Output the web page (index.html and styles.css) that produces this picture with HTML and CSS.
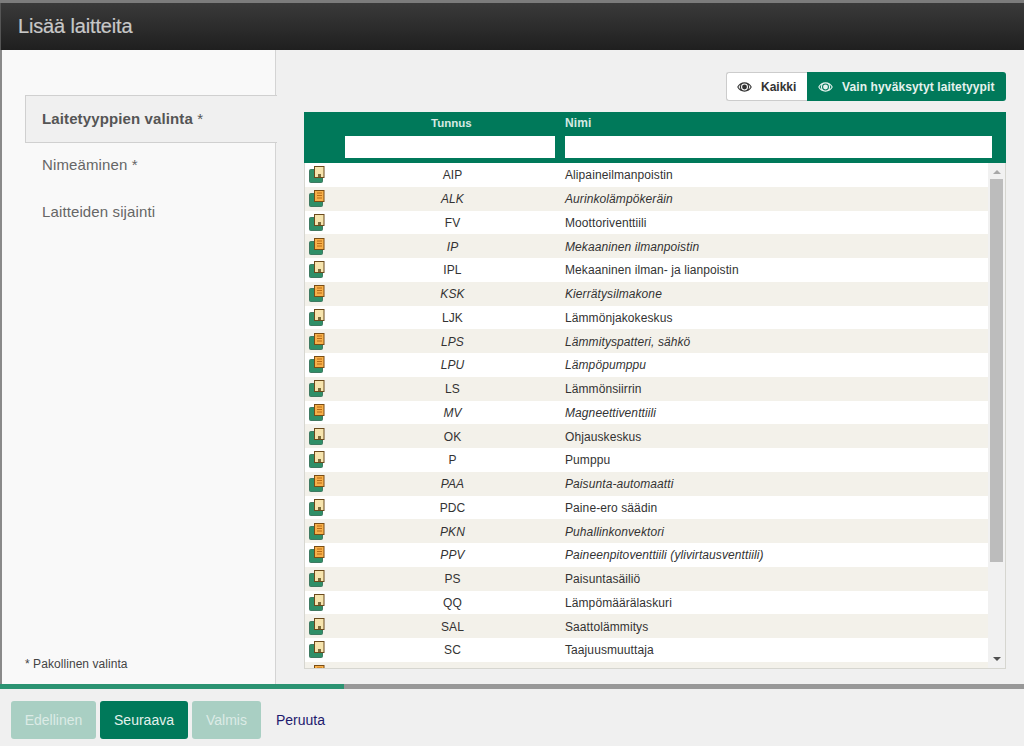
FILE: index.html
```html
<!DOCTYPE html>
<html lang="fi">
<head>
<meta charset="utf-8">
<title>Lisää laitteita</title>
<link rel="stylesheet" href="styles.css">
</head>
<body>
<svg class="defs" width="0" height="0" aria-hidden="true">
  <symbol id="icon-a" viewBox="0 0 16 17">
    <rect x="0.5" y="3.500" width="13" height="13" rx="1" fill="#2f8f68" stroke="#3f7a62"/>
    <rect x="5.500" y="0.500" width="9.500" height="11" fill="#f6e4ae" stroke="#6b4a1c"/>
    <rect x="9" y="8" width="3" height="3" fill="#7a6a3a"/>
  </symbol>
  <symbol id="icon-b" viewBox="0 0 16 17">
    <rect x="0.5" y="3.500" width="13" height="13" rx="1" fill="#2f8f68" stroke="#3f7a62"/>
    <rect x="5.500" y="0.500" width="9.500" height="11" fill="#f7b04a" stroke="#7a4d14"/>
    <path d="M8 3h5M8 5.500h5M8 8h5" stroke="#b86a14" stroke-width="1"/>
  </symbol>
  <symbol id="eye" viewBox="0 0 16 12">
    <path fill="currentColor" fill-rule="evenodd" d="M8 1C4.600 1 1.800 3 .2 6c1.600 3 4.400 5 7.800 5s6.200-2 7.800-5C14.200 3 11.400 1 8 1zm0 1.300a3.700 3.700 0 1 1 0 7.400 3.700 3.700 0 0 1 0-7.400zM3.600 3.600A8 8 0 0 0 1.500 6a8 8 0 0 0 2.100 2.400 5 5 0 0 1 0-4.800zm8.800 0a5 5 0 0 1 0 4.800A8 8 0 0 0 14.500 6a8 8 0 0 0-2.100-2.400z"/>
    <circle cx="8" cy="6" r="2.600" fill="currentColor"/>
  </symbol>
</svg>
<div class="app">
  <header class="title-bar"><h1>Lisää laitteita</h1></header>
  <div class="main">
    <aside class="side">
      <div class="side-top"></div>
      <nav class="steps">
        <div class="step active">Laitetyyppien valinta <span class="star">*</span></div>
        <div class="step">Nimeäminen *</div>
        <div class="step">Laitteiden sijainti</div>
      </nav>
      <p class="req">* Pakollinen valinta</p>
    </aside>
    <section class="content">
      <div class="toggle">
        <button class="tg tg-off"><svg class="eye"><use href="#eye"/></svg>Kaikki</button>
        <button class="tg tg-on"><svg class="eye"><use href="#eye"/></svg>Vain hyväksytyt laitetyypit</button>
      </div>
      <div class="grid">
        <div class="grid-head">
          <div class="gh-labels"><span class="gh-code">Tunnus</span><span class="gh-name">Nimi</span></div>
          <div class="gh-filters"><input class="f-code" type="text" aria-label="Tunnus"><input class="f-name" type="text" aria-label="Nimi"></div>
        </div>
        <div class="grid-body">
          <div class="rows">
            <div class="row"><svg class="ic"><use href="#icon-a"/></svg><span class="code">AIP</span><span class="name">Alipaineilmanpoistin</span></div>
            <div class="row alt it"><svg class="ic"><use href="#icon-b"/></svg><span class="code">ALK</span><span class="name">Aurinkolämpökeräin</span></div>
            <div class="row"><svg class="ic"><use href="#icon-a"/></svg><span class="code">FV</span><span class="name">Moottoriventtiili</span></div>
            <div class="row alt it"><svg class="ic"><use href="#icon-b"/></svg><span class="code">IP</span><span class="name">Mekaaninen ilmanpoistin</span></div>
            <div class="row"><svg class="ic"><use href="#icon-a"/></svg><span class="code">IPL</span><span class="name">Mekaaninen ilman- ja lianpoistin</span></div>
            <div class="row alt it"><svg class="ic"><use href="#icon-b"/></svg><span class="code">KSK</span><span class="name">Kierrätysilmakone</span></div>
            <div class="row"><svg class="ic"><use href="#icon-a"/></svg><span class="code">LJK</span><span class="name">Lämmönjakokeskus</span></div>
            <div class="row alt it"><svg class="ic"><use href="#icon-b"/></svg><span class="code">LPS</span><span class="name">Lämmityspatteri, sähkö</span></div>
            <div class="row it"><svg class="ic"><use href="#icon-b"/></svg><span class="code">LPU</span><span class="name">Lämpöpumppu</span></div>
            <div class="row alt"><svg class="ic"><use href="#icon-a"/></svg><span class="code">LS</span><span class="name">Lämmönsiirrin</span></div>
            <div class="row it"><svg class="ic"><use href="#icon-b"/></svg><span class="code">MV</span><span class="name">Magneettiventtiili</span></div>
            <div class="row alt"><svg class="ic"><use href="#icon-a"/></svg><span class="code">OK</span><span class="name">Ohjauskeskus</span></div>
            <div class="row"><svg class="ic"><use href="#icon-a"/></svg><span class="code">P</span><span class="name">Pumppu</span></div>
            <div class="row alt it"><svg class="ic"><use href="#icon-b"/></svg><span class="code">PAA</span><span class="name">Paisunta-automaatti</span></div>
            <div class="row"><svg class="ic"><use href="#icon-a"/></svg><span class="code">PDC</span><span class="name">Paine-ero säädin</span></div>
            <div class="row alt it"><svg class="ic"><use href="#icon-b"/></svg><span class="code">PKN</span><span class="name">Puhallinkonvektori</span></div>
            <div class="row it"><svg class="ic"><use href="#icon-b"/></svg><span class="code">PPV</span><span class="name">Paineenpitoventtiili (ylivirtausventtiili)</span></div>
            <div class="row alt"><svg class="ic"><use href="#icon-a"/></svg><span class="code">PS</span><span class="name">Paisuntasäiliö</span></div>
            <div class="row"><svg class="ic"><use href="#icon-a"/></svg><span class="code">QQ</span><span class="name">Lämpömäärälaskuri</span></div>
            <div class="row alt"><svg class="ic"><use href="#icon-a"/></svg><span class="code">SAL</span><span class="name">Saattolämmitys</span></div>
            <div class="row"><svg class="ic"><use href="#icon-a"/></svg><span class="code">SC</span><span class="name">Taajuusmuuttaja</span></div>
            <div class="row alt"><svg class="ic"><use href="#icon-b"/></svg></div>
          </div>
          <div class="scroll">
            <span class="arr arr-up"></span>
            <div class="track"><div class="thumb"></div></div>
            <span class="arr arr-down"></span>
          </div>
        </div>
      </div>
    </section>
  </div>
  <div class="progress"><div class="progress-fill"></div></div>
  <footer class="foot">
    <button class="btn dim b-prev">Edellinen</button>
    <button class="btn b-next">Seuraava</button>
    <button class="btn dim b-done">Valmis</button>
    <a class="cancel" href="#">Peruuta</a>
  </footer>
</div>
</body>
</html>
```

FILE: styles.css
```css
* { box-sizing: border-box; }
html, body { margin: 0; height: 100%; }
body { width: 1024px; height: 746px; overflow: hidden; background: #f0f0f0; font-family: "Liberation Sans", Arial, sans-serif; font-size: 12px; color: #333; }
.defs { position: absolute; }
.app { height: 746px; display: flex; flex-direction: column; border-top: 3px solid #7c7c7c; }
.title-bar { height: 47px; flex: none; background: linear-gradient(#3a3a3a, #1f1f1f); display: flex; align-items: center; padding: 0 0 0 17px; border-left: 1px solid #555; }
.title-bar h1 { margin: 0; font-size: 20px; font-weight: 400; color: #c8c8c8; letter-spacing: -0.15px; -webkit-text-stroke: 0.2px #c8c8c8; }
.main { flex: 1; min-height: 0; display: flex; border-left: 2px solid #8a8a8a; }
.side { width: 274px; flex: none; background: #f9f9f9; border-right: 1px solid #d4d4d4; display: flex; flex-direction: column; padding-bottom: 12px; }
.side-top { height: 45px; flex: none; }
.steps { flex: 1; display: flex; flex-direction: column; margin-left: 23px; }
.step { height: 47px; flex: none; display: flex; align-items: center; padding: 0 0 5px 17px; font-size: 15px; letter-spacing: 0.12px; color: #666; white-space: pre; }
.step.active { width: 252px; margin-right: -1px; background: #f0f0f0; border: 1px solid #d0d0d0; border-right: 0; font-weight: 700; color: #555; padding: 0 0 2px 16px; height: 48px; }
.star { font-weight: 400; }
.req { margin: 0 0 0 23px; font-size: 12px; color: #444; line-height: 16px; letter-spacing: 0.06px; }
.content { flex: 1; min-width: 0; display: flex; flex-direction: column; padding: 22px 18px 15px 28px; }
.toggle { display: flex; justify-content: flex-end; height: 29px; flex: none; margin-bottom: 11px; }
.tg { height: 29px; display: flex; align-items: center; font-family: inherit; font-size: 12px; font-weight: 700; padding: 0; margin: 0; border-radius: 0; }
.eye { width: 15px; height: 12px; margin-right: 9px; }
.tg-off { width: 81px; background: #fff; color: #333; border: 1px solid #ccc; border-right: 0; border-radius: 3px 0 0 3px; padding-left: 10px; }
.tg-on { width: 199px; background: #00795a; color: #e6f2ee; border: 0; border-radius: 0 3px 3px 0; padding-left: 11px; letter-spacing: 0.12px; }
.grid { flex: 1; min-height: 0; display: flex; flex-direction: column; border: 1px solid #d6d6d0; border-top: 0; background: #f4f4f4; }
.grid-head { height: 51px; flex: none; background: #00795a; margin: 0 -1px; display: flex; flex-direction: column; }
.gh-labels { height: 22px; margin-bottom: 2px; display: flex; align-items: center; font-weight: 700; color: #d5e9e2; font-size: 11.5px; }
.gh-code { width: 261px; padding-left: 127px; }
.gh-name { font-size: 12px; letter-spacing: 0.1px; }
.gh-filters { display: flex; padding-left: 41px; }
.gh-filters input { height: 22px; border: 0; background: #fff; padding: 0; margin: 0; }
.f-code { width: 210px; margin-right: 10px !important; }
.f-name { width: 427px; }
.grid-body { flex: 1; min-height: 0; display: flex; overflow: hidden; }
.rows { flex: 1; min-width: 0; overflow: hidden; }
.row { height: 23.75px; display: flex; align-items: center; padding-top: 1px; background: #fff; color: #333; letter-spacing: 0.09px; }
.row.alt { background: #f3f1ea; }
.row.it .code, .row.it .name { font-style: italic; }
.ic { width: 16px; height: 17px; flex: none; margin: -1px 0 0 4px; }
.code { width: 240px; flex: none; text-align: center; padding-left: 15px; }
.name { margin-left: 0; white-space: nowrap; }
.scroll { width: 17px; flex: none; background: #f1f1f1; display: flex; flex-direction: column; align-items: center; }
.arr { width: 0; height: 0; flex: none; border-left: 4px solid transparent; border-right: 4px solid transparent; }
.arr-up { border-bottom: 4px solid #a8a8a8; margin: 7px 0 5px; }
.arr-down { border-top: 4px solid #505050; margin: 5px 0 7px; }
.track { flex: 1; width: 100%; display: flex; justify-content: center; }
.thumb { width: 13px; height: 383px; background: #bcbcbc; }
.progress { height: 5px; flex: none; background: #989898; }
.progress-fill { width: 344px; height: 100%; background: #2b9372; }
.foot { height: 57px; flex: none; display: flex; align-items: center; padding: 4px 0 0 11px; gap: 4px; background: #f0f0f0; }
.btn { height: 38px; font-family: inherit; font-size: 14px; background: #00795a; color: #e3f1ec; border: 0; border-radius: 3px; padding: 0; }
.btn.dim { background: #a9cfc3; color: #dcebe6; }
.b-prev { width: 85px; }
.b-next { width: 88px; }
.b-done { width: 69px; }
.cancel { margin-left: 11px; font-size: 14px; color: #1e1a6e; text-decoration: none; }
```
